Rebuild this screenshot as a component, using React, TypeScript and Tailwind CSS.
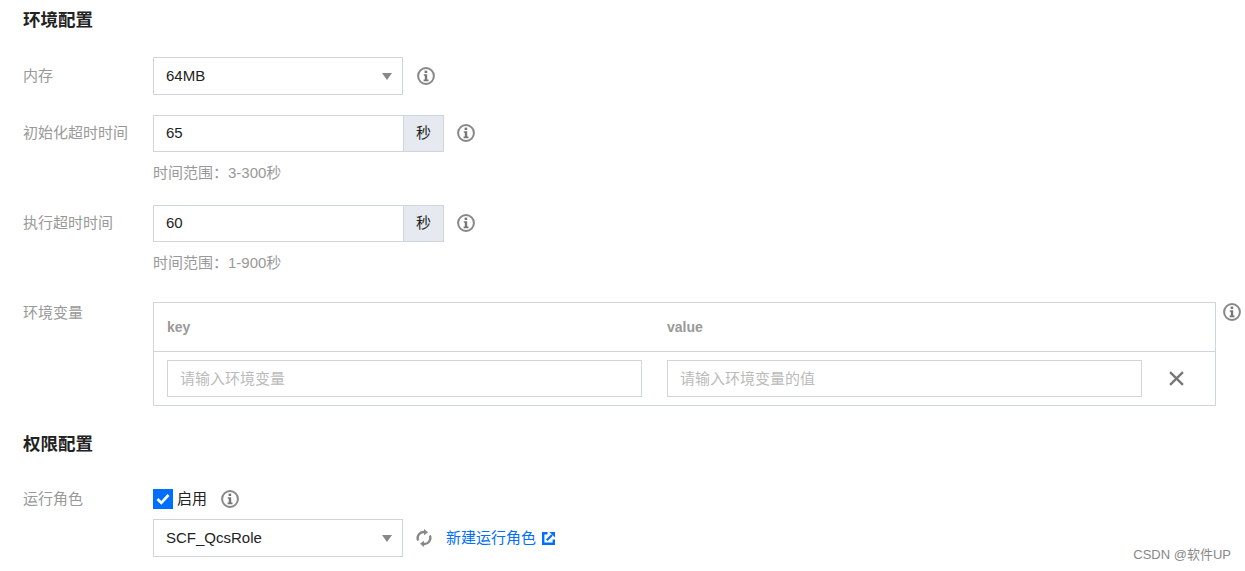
const FONT = "font-['Liberation_Sans','Noto_Sans_CJK_SC',sans-serif]";

function InfoIcon({ className = "" }: { className?: string }) {
  return (
    <svg viewBox="0 0 18 18" className={`w-[18px] h-[18px] shrink-0 ${className}`} fill="none">
      <circle cx="9" cy="9" r="7.9" stroke="#888" strokeWidth="2" />
      <rect x="7.6" y="3.6" width="2.6" height="2.4" fill="#777" />
      <path d="M6.8 7.2h3.4v5.4h1.3v1.6H6.6v-1.6h1.2V8.8h-1z" fill="#777" />
    </svg>
  );
}

function Caret() {
  return (
    <svg viewBox="0 0 10 7" className="w-[10px] h-[7px]">
      <path d="M0 0h10L5 7z" fill="#888" />
    </svg>
  );
}

function SelectBox({ value }: { value: string }) {
  return (
    <div className="w-[250px] h-[38px] border border-[#cfd5de] bg-white flex items-center justify-between pl-[12px] pr-[10px] text-[15px] text-[#222]">
      <span>{value}</span>
      <Caret />
    </div>
  );
}

function SecondsInput({ value }: { value: string }) {
  return (
    <div className="flex h-[37px] w-[291px] border border-[#cfd5de] bg-white text-[15px] text-[#222]">
      <div className="w-[249px] flex items-center pl-[12px]">{value}</div>
      <div className="flex-1 bg-[#e6e9ef] border-l border-[#cfd5de] flex items-center justify-center">秒</div>
    </div>
  );
}

function Label({ children, className = "" }: { children: React.ReactNode; className?: string }) {
  return <div className={`w-[130px] shrink-0 text-[15px] text-[#999] ${className}`}>{children}</div>;
}

function Heading({ children, className = "" }: { children: React.ReactNode; className?: string }) {
  return <h2 className={`text-[17.5px] leading-[24px] font-bold text-[#222] ${className}`}>{children}</h2>;
}

function TextBox({ placeholder }: { placeholder: string }) {
  return (
    <div className="w-[475px] h-[37px] border border-[#cfd5de] flex items-center pl-[12px] pt-px text-[15px] text-[#bbb]">
      {placeholder}
    </div>
  );
}

export default function App() {
  return (
    <div className={`relative w-[1245px] h-[571px] overflow-hidden bg-white pl-[23px] pt-[8px] ${FONT}`}>
      <Heading>环境配置</Heading>

      <div className="flex mt-[25px]">
        <Label className="leading-[38px]">内存</Label>
        <SelectBox value="64MB" />
        <InfoIcon className="ml-[14px] mt-[10px]" />
      </div>

      <div className="flex mt-[20px]">
        <Label className="leading-[36px]">初始化超时时间</Label>
        <div>
          <SecondsInput value="65" />
          <p className="mt-[11px] text-[15px] leading-[20px] text-[#999]">时间范围：3-300秒</p>
        </div>
        <InfoIcon className="ml-[13px] mt-[9px]" />
      </div>

      <div className="flex mt-[22px]">
        <Label className="leading-[36px]">执行超时时间</Label>
        <div>
          <SecondsInput value="60" />
          <p className="mt-[11px] text-[15px] leading-[20px] text-[#999]">时间范围：1-900秒</p>
        </div>
        <InfoIcon className="ml-[13px] mt-[9px]" />
      </div>

      <div className="flex mt-[29px]">
        <Label className="leading-[20px] mt-px">环境变量</Label>
        <div className="w-[1063px] h-[104px] border border-[#cfd5de]">
          <div className="h-[49px] border-b border-[#cfd5de] flex items-center pl-[13px] text-[14px] font-bold text-[#999]">
            <span className="w-[500px]">key</span>
            <span>value</span>
          </div>
          <div className="flex items-center gap-[25px] pl-[13px] pt-[8px]">
            <TextBox placeholder="请输入环境变量" />
            <TextBox placeholder="请输入环境变量的值" />
            <svg viewBox="0 0 14 14" className="w-[15px] h-[15px] ml-[2px]">
              <path d="M1 1l12 12M13 1L1 13" stroke="#777" strokeWidth="2.2" fill="none" />
            </svg>
          </div>
        </div>
        <InfoIcon className="ml-[7px] mt-px" />
      </div>

      <Heading className="mt-[26px]">权限配置</Heading>

      <div className="flex mt-[33px]">
        <Label className="leading-[20px]">运行角色</Label>
        <div>
          <div className="flex items-center h-[20px]">
            <div className="w-[20px] h-[20px] bg-[#006eff] flex items-center justify-center">
              <svg viewBox="0 0 14 12" className="w-[14px] h-[12px]">
                <path d="M1.5 6l3.8 3.8L12.5 2" stroke="#fff" strokeWidth="2.6" fill="none" />
              </svg>
            </div>
            <span className="ml-[4px] text-[15px] text-[#222]">启用</span>
            <InfoIcon className="ml-[14px]" />
          </div>
          <div className="flex items-center mt-[10px]">
            <SelectBox value="SCF_QcsRole" />
            <svg viewBox="0 0 16 18" className="w-[16px] h-[18px] ml-[13px]" fill="none">
              <path d="M2.2 11.5A6 6 0 0 1 8.6 3.1" stroke="#888" strokeWidth="2.4" />
              <path d="M8 0l4 3.2L8 6.2z" fill="#888" />
              <path d="M13.8 6.5A6 6 0 0 1 7.4 14.9" stroke="#888" strokeWidth="2.4" />
              <path d="M8 18l-4-3.2L8 11.8z" fill="#888" />
            </svg>
            <span className="ml-[14px] text-[15px] text-[#006eff]">新建运行角色</span>
            <svg viewBox="0 0 13 13" className="w-[13px] h-[13px] ml-[6px]" fill="none">
              <path d="M5.5 1.2H1.2v10.6h10.6V7.5" stroke="#006eff" strokeWidth="2.4" />
              <path d="M7.5 0h5.5v5.5z" fill="#006eff" />
              <path d="M4.8 8.2L10 3" stroke="#006eff" strokeWidth="2.2" />
            </svg>
          </div>
        </div>
      </div>

      <div className="absolute right-[14px] top-[546px] text-[13px] leading-[18px] text-[#888]">CSDN @软件UP</div>
    </div>
  );
}
